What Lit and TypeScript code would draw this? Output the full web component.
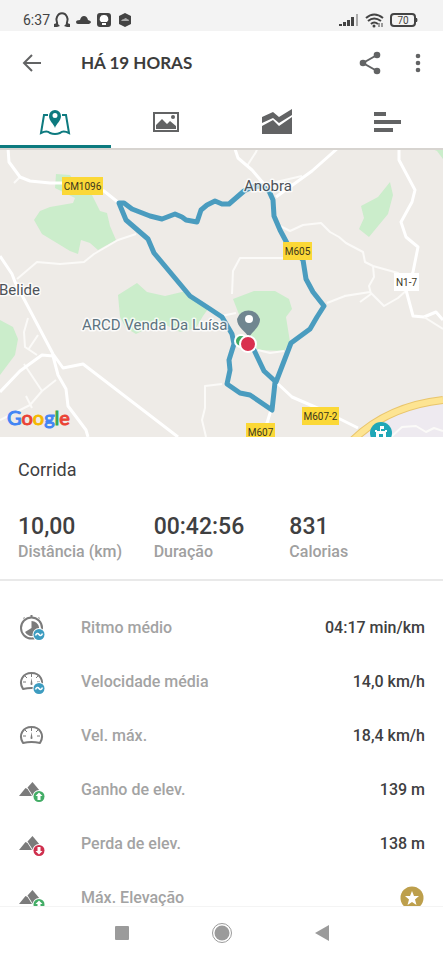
import { LitElement, html, svg, css, nothing } from "lit";
import { customElement } from "lit/decorators.js";

const stopwatch = svg`
  <circle cx="12.500" cy="13" r="10.500" fill="none" stroke="#7b7b7b" stroke-width="2"/>
  <path d="M11.500 0h2v3h-2zM4 4l1-2 1 1zM21 4l-1-2-1 1z" fill="#7b7b7b"/>
  <path d="M12.500 6a7.500 7.500 0 1 1-6.500 11L12.500 13z" fill="#7b7b7b"/>`;

const gauge = svg`
  <path d="M4 20C-1 12 4 4 12.500 4S26 12 21 20q-8.500-2-17 0z" fill="none" stroke="#7b7b7b" stroke-width="2" stroke-linejoin="round"/>
  <path d="M12.500 5v3M4 13h3M18 13h3M6 7l2 2M19 7l-2 2" stroke="#7b7b7b" fill="none"/>
  <path d="M12.500 9l1 6a1 1 0 1 1-2 0z" fill="#7b7b7b"/>`;

const mountains = svg`
  <path d="M0 19L6.500 11l2 1 4.500 7z" fill="#7b7b7b"/>
  <path d="M8.500 10.500L13.500 5l7.500 9-5 5h-2z" fill="#7b7b7b"/>`;

const badge = (color: string, glyph: unknown) => svg`
  <circle cx="20" cy="19.500" r="6.500" fill="#fff"/>
  <circle cx="20" cy="19.500" r="5.500" fill="${color}"/>${glyph}`;

const wave = svg`<path d="M16.500 20.500c1-2.500 2.500-2.500 3.500-1s2.500 1.500 3.500-1" fill="none" stroke="#fff" stroke-width="1.500"/>`;
const up = svg`<path d="M20 15.500l3.500 3.500h-2v4h-3v-4h-2z" fill="#fff"/>`;
const down = svg`<path d="M20 23.500l3.500-3.500h-2v-4h-3v4h-2z" fill="#fff"/>`;

const blue = "#3d9cc0";
const green = "#43ad66";
const red = "#cf2f4d";

interface Metric {
  label: string;
  value?: string;
  icon: unknown;
}

const metrics: Metric[] = [
  { label: "Ritmo médio", value: "04:17 min/km", icon: svg`${stopwatch}${badge(blue, wave)}` },
  { label: "Velocidade média", value: "14,0 km/h", icon: svg`${gauge}${badge(blue, wave)}` },
  { label: "Vel. máx.", value: "18,4 km/h", icon: gauge },
  { label: "Ganho de elev.", value: "139 m", icon: svg`${mountains}${badge(green, up)}` },
  { label: "Perda de elev.", value: "138 m", icon: svg`${mountains}${badge(red, down)}` },
  { label: "Máx. Elevação", icon: svg`${mountains}${badge(green, up)}` },
];

@customElement("route-map")
export class RouteMap extends LitElement {
  static styles = css`
    :host { display: block; height: 289px; flex: none; }
    .map { display: block; width: 100%; height: 100%; background: #eeebe7; }
    .minor { fill: none; stroke: #fbfaf8; stroke-width: 2; stroke-linejoin: round; }
    .road { fill: none; stroke: #fff; stroke-width: 3; stroke-linejoin: round; }
    .park { fill: #cbedcb; }
    .route { fill: none; stroke: #4a9cbf; stroke-width: 5; stroke-linejoin: round; stroke-linecap: round; }
    .tag { font: 400 10px Roboto, sans-serif; fill: #3d371c; text-anchor: middle; }
    .place { font: 400 15px Roboto, sans-serif; fill: #4d5258; stroke: #fff; stroke-width: 3; stroke-opacity: 0.8; paint-order: stroke; stroke-linejoin: round; }
    .poi { fill: #5d7380; }
    .google { font: 400 20px Lato, sans-serif; }
    .halo { fill: none; stroke: #fff; stroke-width: 3; }
  `;

  private tag(x: number, y: number, width: number, label: string, fill = "#fbd837") {
    return svg`<rect x=${x} y=${y} width=${width} height="18" fill=${fill}/>
      <text class="tag" x=${x + width / 2} y=${y + 13}>${label}</text>`;
  }

  render() {
    return html`<svg class="map" viewBox="0 148 443 289" preserveAspectRatio="xMidYMid slice" role="img" aria-label="Mapa do percurso">
      <path class="park" d="M56 174L70 175 80 190 92 195 100 211 107 213 110 226 116 240 98 250 90 243 81 240 78 254 70 251 42 234 34 220 40 211 50 207 73 203 75 198 55 188z"/>
      <path class="park" d="M390 182L393 195 388 214 369 237 359 229 364 218 361 206 378 197z"/>
      <path class="park" d="M118 295L137 283 147 292 165 296 186 291 208 309 203 316 196 328 180 332 166 325 150 327 136 334 126 328 120 317z"/>
      <path class="park" d="M233 299L254 291 275 291 289 299 292 309 286 317 290 342 284 351 258 350 246 330 238 312z"/>
      <path class="park" d="M0 320L13 327 18 339 15 355 0 375z"/>
      <path class="park" d="M430 148h13v11l-6-8z"/>
      <path d="M352 437L380 416 410 406 443 402V437z" fill="#eeeaf0"/>

      <path class="minor" d="M17 279L37 262 60 264 84 262 94 254 118 240 136 234M20 177L14 183M247 166L256 152 258 147M276 182L302 176M280 226L290 231 303 225 321 223 330 232 339 237 346 243 363 252 365 262 373 266 398 273 403 282M373 266L374 277 369 286 371 294 360 302M344 296L370 292M283 258H240L233 271 232 294M28 318L24 332 25 347 37 355M38 335L28 350M24 364L42 391M42 391L56 380M0 420L30 405 42 391M26 396L32 408M222 384L205 386 205 408 202 420 206 437M221 316L236 313M258 350L270 353 284 351M327 303L345 296 370 292 384 306 398 298 408 289"/>
      <path class="road" d="M8 148L9 162 20 177 30 181 50 183 72 183 104 191 119 203M0 256L12 274 15 282 53 354 63 368 83 364 178 437M0 392L20 371 42 355 53 356 58 375 66 389 68 406 80 422 86 430 88 437M234 146L238 158 252 170 264 184M338 148L312 171 276 197M399 148V160L415 190 412 202 401 222 406 237 418 247 413 272 406 290 413 316 424 317 436 312 443 320M276 382L292 397 322 410 358 428M271 410L267 423 261 430"/>
      <path class="minor" d="M424 317L443 329M391 437L402 427 416 426 426 432 434 428 443 431"/>
      <path d="M353 440Q388 406 443 400" fill="none" stroke="#e9c56c" stroke-width="8"/>
      <path d="M353 440Q388 406 443 400" fill="none" stroke="#fde492" stroke-width="6"/>

      <path class="route" d="M248 344L254 350 264 371 276 382 291 343 310 329 317 317 324 306 313 292 306 279 303 260 288 245 280 230 274 216 273 200 269 191 262 186 252 187 244 191 229 204H222L215 201 207 205 201 210 197 222 186 220 182 217 175 214 162 219 150 216 132 209 124 203H119L126 220 148 239 154 253 190 296 210 309 222 317 232 334 234 344 229 360 230 370 227 384 240 393 250 395 272 410 274 392 275 382"/>

      ${this.tag(62, 177, 41, "CM1096")}
      ${this.tag(283, 242, 29, "M605")}
      ${this.tag(302, 407, 37, "M607-2")}
      ${this.tag(246, 423, 29, "M607")}
      ${this.tag(394, 273, 25, "N1-7", "#fff")}
      <text class="place" x="244" y="191">Anobra</text>
      <text class="place" x="-1" y="295">Belide</text>
      <text class="place poi" x="82" y="330">ARCD Venda Da Luísa</text>

      <circle cx="241" cy="341" r="6" fill="#43ad66" stroke="#fff" stroke-width="2"/>
      <path d="M249 338c-3-7-12-10-12-19a12 12 0 0 1 23 0c0 9-8 12-11 19z" fill="#708690"/>
      <circle cx="249" cy="319" r="4" fill="#fff"/>
      <circle cx="248" cy="344" r="8" fill="#d9304f" stroke="#fff" stroke-width="2"/>

      <circle cx="381" cy="433" r="11" fill="#20a7b7"/>
      <path d="M380 426h4v3h-3v2h5v6h-3v-3h-4v3h-3v-6h4zM375 430h2v2h-2zM385 430h2v2h-2z" fill="#fff"/>
      <text class="google" x="7" y="425"><tspan fill="#4285f4" stroke="#4285f4">G</tspan><tspan fill="#ea4335" stroke="#ea4335">o</tspan><tspan fill="#f5b800" stroke="#f5b800">o</tspan><tspan fill="#4285f4" stroke="#4285f4">g</tspan><tspan fill="#34a853" stroke="#34a853">l</tspan><tspan fill="#ea4335" stroke="#ea4335">e</tspan></text>
      <path d="M0 149h443" stroke="#d7d4d0" stroke-width="2"/>
    </svg>`;
  }
}

@customElement("app-root")
export class AppRoot extends LitElement {
  static styles = css`
    :host { display: flex; flex-direction: column; height: 100vh; background: #fff; color: #3f4041; font-family: Roboto, sans-serif; }
    * { box-sizing: border-box; }
    button { display: flex; align-items: center; justify-content: center; padding: 0; border: 0; background: none; color: #626364; }
    svg { display: block; flex: none; fill: currentColor; }
    .status { display: flex; align-items: center; justify-content: space-between; flex: none; height: 31px; padding: 8px 25px 0 23px; background: #f3f3f3; color: #434343; font-size: 14px; line-height: 24px; }
    .left, .right { display: flex; align-items: center; gap: 6px; }
    .left { gap: 4px; }
    .bar { display: flex; align-items: center; flex: none; height: 64px; padding: 0 13px 0 20px; }
    .bar button { width: 24px; height: 40px; }
    .title { flex: 1; margin: 0 0 0 37px; font: 700 17px/24px Lato, sans-serif; color: #3c3c3c; }
    .actions { display: flex; gap: 24px; }
    .tabs { display: grid; grid-template-columns: repeat(4, 1fr); flex: none; height: 53px; }
    .tab { padding-top: 3px; border-bottom: 3px solid transparent; }
    .tab.active { color: #0d7a7f; border-color: #0d7a7f; }
    .summary { flex: none; padding: 21px 18px 16px; border-bottom: 2px solid #e9e9e9; }
    .sport { margin: 0; font-size: 18px; font-weight: 400; line-height: 24px; }
    .totals { display: grid; grid-template-columns: 1fr 1fr 1fr; margin: 31px 0 0; }
    .total { display: flex; flex-direction: column-reverse; }
    .total dt { color: #a0a0a0; font-size: 16px; font-weight: 500; line-height: 22px; }
    .total dd { margin: 0; font-size: 23px; font-weight: 500; line-height: 28px; }
    .metrics { flex: 1; min-height: 0; margin: 0; padding: 20px 18px 0 19px; overflow-y: auto; scrollbar-width: none; }
    .metric { display: flex; align-items: center; height: 54px; font-size: 16px; font-weight: 500; line-height: 24px; }
    .metric dt { flex: 1; margin-left: 36px; color: #a3a3a3; }
    .metric dd { margin: 0; }
    .star { margin-right: 1px; }
    .nav { display: flex; justify-content: center; align-items: center; gap: 62px; flex: none; height: 54px; padding-bottom: 1px; border-top: 1px solid #f4f4f4; background: #fff; }
    .nav button { width: 38px; height: 40px; color: #9b9b9b; }
    .cell { font: 400 10px/10px Roboto, sans-serif; }
  `;

  render() {
    return html`
      <div class="status">
        <div class="left">
          <span>6:37</span>
          <svg width="16" height="16" viewBox="0 0 16 16"><path d="M3 13C4 9 1 9 3 5c2-5 8-5 10 0 2 4-1 4 0 8" fill="none" stroke="currentColor" stroke-width="2"/><path d="M0 12l3-1 3 3-3 1H0zM16 12l-3-1-3 3 3 1h3z"/></svg>
          <svg width="18" height="16" viewBox="0 0 18 16"><path d="M4 12q-2 0-2-2t4-2q1-4 4-4 3 0 4 4 3 1 3 2t-2 2z"/></svg>
          <svg width="16" height="16" viewBox="0 0 16 16"><rect x="1" y="1" width="14" height="14" rx="3"/><path d="M8 3a4 4 0 0 1 3 7H5a4 4 0 0 1 3-7zM6 11h4v2H6z" fill="#fff"/></svg>
          <svg width="20" height="16" viewBox="0 0 20 16"><path d="M9 1l6 3v8l-6 3-6-3V4z"/><path d="M5 9q1-2 3-2 2-2 3 0 2 0 2 2z" fill="#aaa"/></svg>
        </div>
        <div class="right">
          <svg width="20" height="14" viewBox="0 0 20 14"><path d="M0 11h3v2H0zM4 9h3v4H4zM8 7h3v6H8zM12 4h3v9h-3z"/><path d="M17 1h2v12h-2z" fill="#aaa"/></svg>
          <svg width="19" height="16" viewBox="0 0 19 16"><path d="M1 6q8-7 17 0M3 9q6-5 13 0M6 12q3-3 7 0" fill="none" stroke="currentColor" stroke-width="2"/><circle cx="9" cy="14" r="1.500"/><path d="M14 15v-4M17 11v4" stroke="currentColor"/></svg>
          <svg width="28" height="14" viewBox="0 0 28 14" role="img" aria-label="Bateria 70"><rect x="1" y="1" width="24" height="12" rx="3" fill="none" stroke="currentColor" stroke-width="2"/><path d="M26 5h1q1 2 0 4h-1z"/><text class="cell" x="13" y="11" text-anchor="middle">70</text></svg>
        </div>
      </div>
      <header class="bar">
        <button aria-label="Voltar"><svg width="24" height="24" viewBox="0 0 24 24"><path d="M21 12H4M12 4l-8 8 8 8" fill="none" stroke="currentColor" stroke-width="2"/></svg></button>
        <h1 class="title">HÁ 19 HORAS</h1>
        <div class="actions">
          <button aria-label="Partilhar"><svg width="24" height="24" viewBox="0 0 24 24"><path d="M19 4L5 12l14 8" fill="none" stroke="currentColor" stroke-width="2"/><circle cx="19" cy="4" r="3.300"/><circle cx="5" cy="12" r="3.300"/><circle cx="19" cy="20" r="3.300"/></svg></button>
          <button aria-label="Mais opções"><svg width="24" height="24" viewBox="0 0 24 24"><circle cx="12" cy="5" r="2.300"/><circle cx="12" cy="12" r="2.300"/><circle cx="12" cy="19" r="2.300"/></svg></button>
        </div>
      </header>
      <nav class="tabs" role="tablist">
        <button class="tab active" role="tab" aria-selected="true" aria-label="Mapa"><svg width="32" height="28" viewBox="0 0 32 28"><path d="M9 7H5L2 25q6-3 9 0 5 2 10 0 3-3 9 0L27 7h-4" fill="none" stroke="currentColor" stroke-width="2"/><path d="M16 20c-1-4-6-7-6-12a6 6 0 0 1 12 0c0 5-5 8-6 12zM16 5a2.500 2.500 0 1 0 0 5 2.500 2.500 0 0 0 0-5z" fill-rule="evenodd"/></svg></button>
        <button class="tab" role="tab" aria-selected="false" aria-label="Fotografias"><svg width="28" height="24" viewBox="0 0 28 24"><path d="M2 3h24v18H2z" fill="none" stroke="currentColor" stroke-width="2"/><path d="M4 19v-4l6-6 5 5 3-3 6 5v3z"/><circle cx="21" cy="7" r="2"/></svg></button>
        <button class="tab" role="tab" aria-selected="false" aria-label="Gráficos"><svg width="32" height="28" viewBox="0 0 32 28"><path d="M1 9l11-5 6 5L31 1v6l-13 8-6-5-11 5zM1 18l11-6 6 6 13-9v17H1z"/></svg></button>
        <button class="tab" role="tab" aria-selected="false" aria-label="Voltas"><svg width="28" height="24" viewBox="0 0 28 24"><path d="M0 2h12v4H0zM0 10h27v4H0zM0 18h19v4H0z"/></svg></button>
      </nav>
      <route-map></route-map>
      <section class="summary">
        <h2 class="sport">Corrida</h2>
        <dl class="totals">
          <div class="total"><dt>Distância (km)</dt><dd>10,00</dd></div>
          <div class="total"><dt>Duração</dt><dd>00:42:56</dd></div>
          <div class="total"><dt>Calorias</dt><dd>831</dd></div>
        </dl>
      </section>
      <dl class="metrics">
        ${metrics.map((m) => html`
          <div class="metric">
            <svg width="26" height="26" viewBox="0 0 26 26">${m.icon}</svg>
            <dt>${m.label}</dt>
            <dd>${m.value ?? nothing}${m.value ? nothing : html`<svg class="star" width="24" height="24" viewBox="0 0 24 24" role="img" aria-label="Recorde"><circle cx="12" cy="12" r="11.500" fill="#bd9f4c"/><path d="M12 5l2 5h5l-4 3.500 1.500 5.500-4.500-3-4.500 3L9 13.500 5 10h5z" fill="#fff"/></svg>`}</dd>
          </div>`)}
      </dl>
      <nav class="nav">
        <button aria-label="Recentes"><svg width="14" height="14" viewBox="0 0 14 14"><rect width="14" height="14" rx="1"/></svg></button>
        <button aria-label="Início"><svg width="22" height="22" viewBox="0 0 22 22"><circle cx="11" cy="11" r="9.500" fill="none" stroke="currentColor"/><circle cx="11" cy="11" r="7.500"/></svg></button>
        <button aria-label="Retroceder"><svg width="14" height="16" viewBox="0 0 14 16"><path d="M14 0v16L0 8z"/></svg></button>
      </nav>
    `;
  }
}
